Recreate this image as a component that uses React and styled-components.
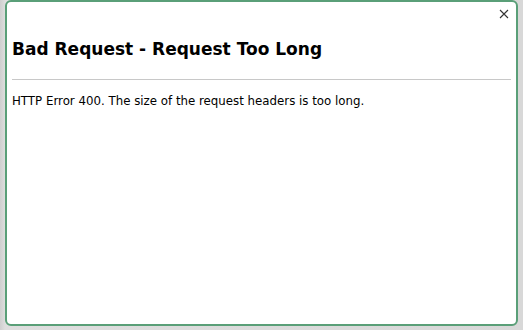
import React from 'react';
import styled, { createGlobalStyle } from 'styled-components';

const GlobalStyle = createGlobalStyle`
    html, body {
        margin: 0;
        padding: 0;
    }
    body {
        font-family: "DejaVu Sans", Verdana, sans-serif;
        background: #d6d6d6;
    }
`
const Backdrop = styled.div`
    width: 523px;
    height: 330px;
    box-sizing: border-box;
    padding: 0px 5px 4px 5px;
    background: linear-gradient(90deg, #cfcfcf 0px, #dedede 5px, #d8d8d8 100%);
    display: flex;
`
const Dialog = styled.div`
    flex: 1;
    position: relative;
    background: #ffffff;
    border: 2px solid #5a9f78;
    border-radius: 6px;
    display: flex;
    flex-direction: column;
    padding: 0px 5px 0px 5px;
`
const CloseButton = styled.button`
    position: absolute;
    top: 5px;
    right: 5px;
    width: 14px;
    height: 14px;
    padding: 0;
    border: none;
    background: transparent;
    display: flex;
    align-items: center;
    justify-content: center;
`
const Title = styled.h2`
    margin: 33px 0px 0px 0px;
    font-size: 17px;
    line-height: 28px;
    font-weight: bold;
    color: #000;
`
const Divider = styled.hr`
    margin: 16px 0px 0px 0px;
    border: none;
    border-top: 1.5px solid #c8c8c8;
    height: 0;
`
const Message = styled.p`
    margin: 13px 0px 0px 0px;
    font-size: 11.8px;
    line-height: 16px;
    color: #000;
`

const App = () => {
    return(
        <>
            <GlobalStyle />
            <Backdrop>
                <Dialog>
                    <CloseButton aria-label="Close">
                        <svg width="10" height="10" viewBox="0 0 10 10">
                            <path d="M1 1 L9 9 M9 1 L1 9" stroke="#333" strokeWidth="1.1" />
                        </svg>
                    </CloseButton>
                    <Title>Bad Request - Request Too Long</Title>
                    <Divider />
                    <Message>HTTP Error 400. The size of the request headers is too long.</Message>
                </Dialog>
            </Backdrop>
        </>
    )
}

export default App;
